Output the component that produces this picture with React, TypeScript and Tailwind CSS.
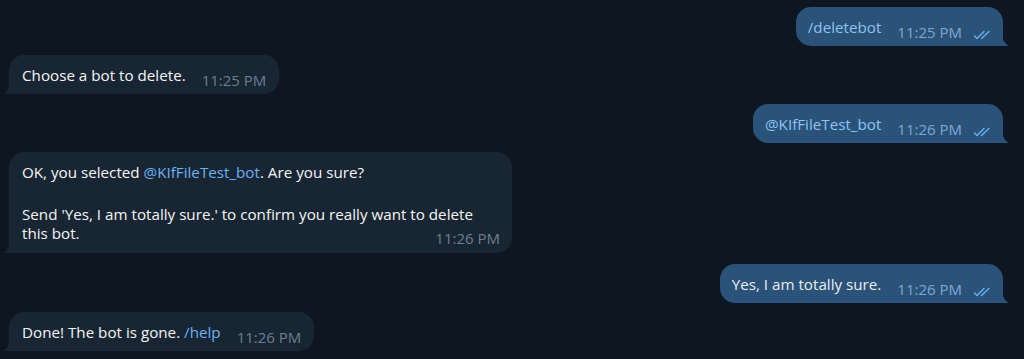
import type { ReactNode } from 'react';

function Ticks() {
  return (
    <svg width="19" height="10" viewBox="0 0 19 10" fill="none" stroke="#64b5ef" strokeWidth="1.4" strokeLinecap="round" strokeLinejoin="round" className="ml-[11px] mb-[2px] translate-y-[5px]">
      <path d="M1.5 6 L4 8.5 L11 1.5" />
      <path d="M8.5 8.5 L16 1.5" />
    </svg>
  );
}

function Tail({ out }: { out?: boolean }) {
  return out ? (
    <svg width="7" height="13" viewBox="0 0 7 13" className="absolute bottom-0 right-[-6px]">
      <path d="M0 0 C0 6 3 11 7 13 H0 Z" fill="#2b5278" />
    </svg>
  ) : (
    <svg width="7" height="13" viewBox="0 0 7 13" className="absolute bottom-0 left-[-6px]">
      <path d="M7 0 C7 6 4 11 0 13 H7 Z" fill="#182533" />
    </svg>
  );
}

function Time({ t, out }: { t: string; out?: boolean }) {
  return (
    <span className={`shrink-0 text-[15px] leading-[19px] translate-y-[5px] whitespace-nowrap ${out ? 'text-[#7da8d3]' : 'text-[#6d7f8f]'}`}>
      {t}
    </span>
  );
}

function Bubble({ out, time, children, className = '' }: { out?: boolean; time: string; children: ReactNode; className?: string }) {
  return (
    <div className={`flex ${out ? 'justify-end' : 'justify-start'} ${className}`}>
      <div
        className={`relative flex items-end pt-[11px] pb-[9px] ${
          out ? 'bg-[#2b5278] rounded-[15px] rounded-br-none pl-[12px] pr-[11px]' : 'bg-[#182533] rounded-[15px] rounded-bl-none pl-[13px] pr-[13px]'
        }`}
      >
        <div className="leading-[19px] whitespace-nowrap mr-[16px]">{children}</div>
        <Time t={time} out={out} />
        {out && <Ticks />}
        <Tail out={out} />
      </div>
    </div>
  );
}

export default function App() {
  return (
    <div className="h-[359px] w-[1024px] overflow-hidden bg-[#0e1621] pl-[9px] pr-[21px] text-[15.2px] text-[#f5f5f5]" style={{ fontFamily: '"Open Sans", "Noto Sans", sans-serif' }}>
      <Bubble out time="11:25 PM" className="mt-[7px]">
        <span className="text-[#8cc4f2]">/deletebot</span>
      </Bubble>
      <Bubble time="11:25 PM" className="mt-[9px]">
        Choose a bot to delete.
      </Bubble>
      <Bubble out time="11:26 PM" className="mt-[10px]">
        <span className="text-[#8cc4f2]">@KIfFileTest_bot</span>
      </Bubble>

      <div className="mt-[9px] flex">
        <div className="relative w-[503px] rounded-[15px] rounded-bl-none bg-[#182533] pl-[13px] pr-[12px] pt-[11px] pb-[10px] leading-[19px]">
          <div>
            OK, you selected <span className="text-[#6ab2f2]">@KIfFileTest_bot</span>. Are you sure?
          </div>
          <div className="mt-[23px] whitespace-nowrap">Send 'Yes, I am totally sure.' to confirm you really want to delete</div>
          <div className="flex items-end justify-between">
            <span>this bot.</span>
            <Time t="11:26 PM" />
          </div>
          <Tail />
        </div>
      </div>

      <Bubble out time="11:26 PM" className="mt-[11px]">
        <span className="text-[#e9eef3]">Yes, I am totally sure.</span>
      </Bubble>
      <Bubble time="11:26 PM" className="mt-[9px]">
        Done! The bot is gone. <span className="text-[#6ab2f2]">/help</span>
      </Bubble>
    </div>
  );
}
